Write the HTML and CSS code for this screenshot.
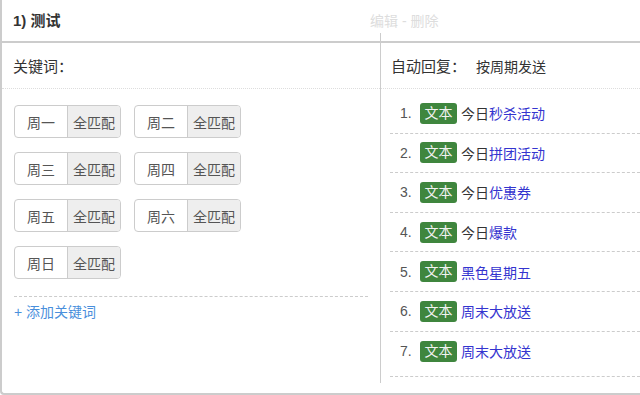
FILE: index.html
```html
<!DOCTYPE html>
<html lang="zh-CN">
<head>
    <meta charset="UTF-8">
    <meta name="viewport" content="width=device-width, initial-scale=1.0">
    <title>关键词回复</title>
    <link rel="stylesheet" href="styles.css">
</head>
<body>
    <div class="card">
        <div class="card-head">
            <span class="title">1) 测试</span>
            <span class="actions">编辑 - 删除</span>
        </div>
        <div class="card-body">
            <div class="col keywords">
                <div class="col-label">关键词：</div>
                <div class="tags">
                    <div class="tag"><span class="day">周一</span><span class="match">全匹配</span></div>
                    <div class="tag"><span class="day">周二</span><span class="match">全匹配</span></div>
                    <div class="tag"><span class="day">周三</span><span class="match">全匹配</span></div>
                    <div class="tag"><span class="day">周四</span><span class="match">全匹配</span></div>
                    <div class="tag"><span class="day">周五</span><span class="match">全匹配</span></div>
                    <div class="tag"><span class="day">周六</span><span class="match">全匹配</span></div>
                    <div class="tag"><span class="day">周日</span><span class="match">全匹配</span></div>
                </div>
                <div class="add"><a href="#">+ 添加关键词</a></div>
            </div>
            <div class="col replies">
                <div class="col-label">自动回复：<span class="mode">按周期发送</span></div>
                <ol class="reply-list">
                    <li><span class="num">1.</span><span class="badge">文本</span>今日<a href="#">秒杀活动</a></li>
                    <li><span class="num">2.</span><span class="badge">文本</span>今日<a href="#">拼团活动</a></li>
                    <li><span class="num">3.</span><span class="badge">文本</span>今日<a href="#">优惠券</a></li>
                    <li><span class="num">4.</span><span class="badge">文本</span>今日<a href="#">爆款</a></li>
                    <li><span class="num">5.</span><span class="badge">文本</span><a href="#">黑色星期五</a></li>
                    <li><span class="num">6.</span><span class="badge">文本</span><a href="#">周末大放送</a></li>
                    <li><span class="num">7.</span><span class="badge">文本</span><a href="#">周末大放送</a></li>
                </ol>
            </div>
        </div>
    </div>
</body>
</html>
```

FILE: styles.css
```css
body {
    margin: 0;
    font-family: "Liberation Sans", "Noto Sans CJK SC", sans-serif;
    font-size: 14px;
    color: #333;
    background: #fff;
}
a {
    text-decoration: none;
}
.card {
    box-sizing: border-box;
    height: 395px;
    border-left: 2px solid #ccc;
    border-bottom: 2px solid #ccc;
    border-bottom-left-radius: 4px;
}
.card-head {
    box-sizing: border-box;
    height: 43px;
    display: flex;
    align-items: center;
    padding: 0 11px 2px;
    border-bottom: 2px solid #ccc;
}
.title {
    flex: 0 0 357px;
    font-size: 15px;
    font-weight: bold;
}
.actions {
    color: #ddd;
    font-size: 14px;
}
.card-body {
    display: grid;
    grid-template-columns: 378px 1fr;
    align-items: start;
}
.col-label {
    box-sizing: border-box;
    height: 46px;
    display: flex;
    align-items: center;
    padding-left: 11px;
    font-size: 15px;
    border-bottom: 1px dotted #ddd;
}
.replies {
    margin-top: -10px;
    padding-top: 10px;
    padding-bottom: 6px;
    border-left: 1px solid #ccc;
}
.replies .col-label {
    padding-left: 10px;
}
.mode {
    margin-left: 10px;
    font-size: 14px;
}
.tags {
    display: grid;
    grid-template-columns: repeat(2, 107px);
    gap: 14px 13px;
    padding: 16px 0 0 12px;
}
.tag {
    box-sizing: border-box;
    width: 107px;
    height: 33px;
    display: flex;
    border: 1px solid #ccc;
    border-radius: 4px;
    overflow: hidden;
    color: #555;
}
.tag span {
    display: flex;
    align-items: center;
    justify-content: center;
}
.tag .day {
    flex: 0 0 52px;
}
.tag .match {
    flex: 1;
    background: #eee;
    border-left: 1px solid #ccc;
}
.add {
    margin: 17px 12px 0;
    padding-top: 5px;
    border-top: 1px dashed #ccc;
    line-height: 20px;
}
.add a {
    color: #4a8fdc;
}
.reply-list {
    list-style: none;
    margin: 0 0 0 9px;
    padding: 5px 0 0;
}
.reply-list li {
    box-sizing: border-box;
    height: 39.6px;
    display: flex;
    align-items: center;
    padding-left: 10px;
    border-bottom: 1px dashed #ccc;
}
.reply-list li:last-child {
    height: 45px;
    padding-bottom: 5px;
}
.num {
    width: 20px;
    color: #555;
}
.badge {
    margin-right: 4px;
    padding: 0 4.5px;
    line-height: 21px;
    border-radius: 3px;
    background: #3f863e;
    color: #f2f2f2;
}
.reply-list a {
    color: #3434cf;
}
```
